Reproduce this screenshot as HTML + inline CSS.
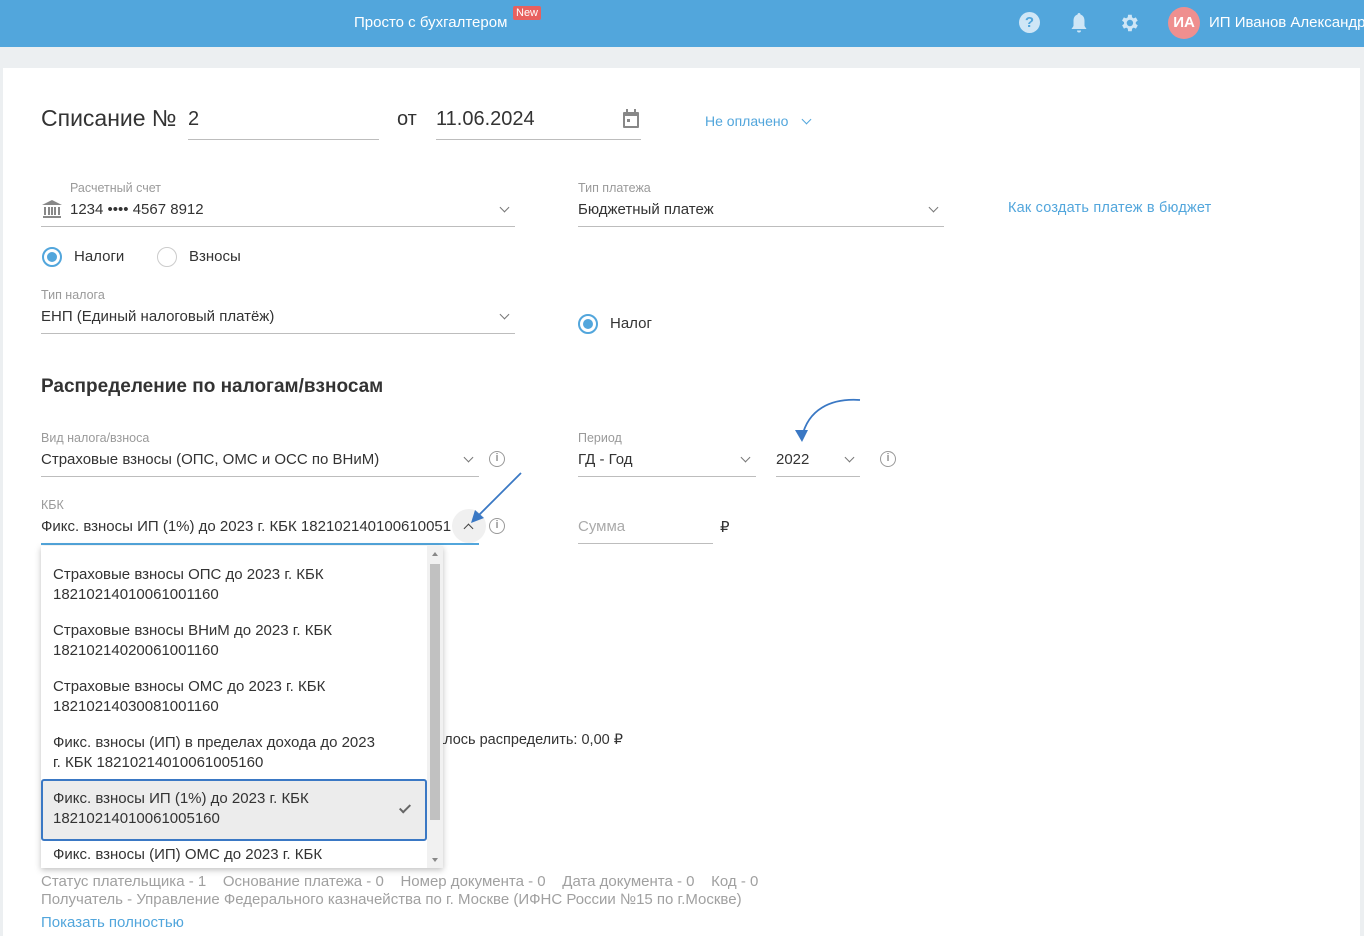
<!DOCTYPE html>
<html><head><meta charset="utf-8"><style>
*{box-sizing:border-box;margin:0;padding:0}
body{width:1364px;height:936px;overflow:hidden;background:#eceff1;font-family:"Liberation Sans","DejaVu Sans",sans-serif;color:#333;position:relative}
.a{position:absolute;white-space:nowrap}
.hdr{position:absolute;left:0;top:0;width:1364px;height:47px;background:#52a6dc}
.panel{position:absolute;left:3px;top:68px;width:1357px;height:868px;background:#fff}
.lbl{font-size:12.5px;color:#9a9a9a}
.val{font-size:15px;color:#333}
.line{position:absolute;height:1px;background:#bdbdbd}
.chev{position:absolute;width:7px;height:7px;border-right:1.5px solid #777;border-bottom:1.5px solid #777;transform:rotate(45deg)}
.info{position:absolute;width:16px;height:16px;border:1.5px solid #999;border-radius:50%;font-size:11px;color:#999;text-align:center;line-height:13px;font-weight:bold}
.radio{position:absolute;width:20px;height:20px;border:1.5px solid #ccc;border-radius:50%}
.radio.on{border:2px solid #52a6dc}
.radio.on:after{content:"";position:absolute;left:3px;top:3px;width:10px;height:10px;border-radius:50%;background:#52a6dc}
.dd{position:absolute;left:41px;top:546px;width:402px;height:322px;background:#fff;box-shadow:0 2px 6px rgba(0,0,0,.25);overflow:hidden}
.it{position:absolute;left:12px;font-size:15px;line-height:20px;color:#333}
</style></head><body>
<div class="hdr"></div>
<div class="a" style="left:354px;top:14px;font-size:15px;color:#fff">Просто с бухгалтером</div>
<div class="a" style="left:513px;top:6px;background:#e8605f;color:#fff;font-size:11px;padding:1px 3px;border-radius:2px">New</div>
<div class="a" style="left:1019px;top:12px;width:21px;height:21px;border-radius:50%;background:#cfe6f6;color:#52a6dc;font-size:15px;font-weight:bold;text-align:center;line-height:21px">?</div>
<svg class="a" style="left:1069px;top:12px" width="20" height="22" viewBox="0 0 20 22"><path d="M10 1c-1 0-1.5.8-1.5 1.5C5.5 3.5 4.5 6 4.5 9v5L2.5 17h15l-2-3V9c0-3-1-5.5-4-6.5C11.5 1.8 11 1 10 1zM8 18.5a2 2 0 0 0 4 0z" fill="#cfe6f6"/></svg>
<svg class="a" style="left:1118px;top:12px" width="22" height="22" viewBox="0 0 24 24"><path fill="#cfe6f6" d="M19.4 13a7.5 7.5 0 0 0 0-2l2.1-1.6-2-3.5-2.5 1a7 7 0 0 0-1.7-1L15 3h-4l-.4 2.9a7 7 0 0 0-1.7 1l-2.5-1-2 3.5L6.6 11a7.5 7.5 0 0 0 0 2l-2.1 1.6 2 3.5 2.5-1a7 7 0 0 0 1.7 1L11 21h4l.4-2.9a7 7 0 0 0 1.7-1l2.5 1 2-3.5zM13 15.5a3.5 3.5 0 1 1 0-7 3.5 3.5 0 0 1 0 7z"/></svg>
<div class="a" style="left:1168px;top:7px;width:32px;height:32px;border-radius:50%;background:#ef8f8f;color:#fff;font-size:15px;font-weight:bold;text-align:center;line-height:32px">ИА</div>
<div class="a" style="left:1209px;top:14px;font-size:15px;color:#fff">ИП Иванов Александр</div>
<div class="panel"></div>

<div class="a" style="left:41px;top:105px;font-size:23px;color:#333">Списание №</div>
<div class="a" style="left:188px;top:108px;font-size:20px">2</div>
<div class="line" style="left:188px;top:139px;width:191px"></div>
<div class="a" style="left:397px;top:108px;font-size:20px">от</div>
<div class="a" style="left:436px;top:108px;font-size:20px">11.06.2024</div>
<div class="line" style="left:436px;top:139px;width:205px"></div>
<svg class="a" style="left:622px;top:109px" width="18" height="20" viewBox="0 0 18 20"><rect x="1" y="3" width="16" height="16" rx="1" fill="#888"/><rect x="3" y="7" width="12" height="10" fill="#fff"/><rect x="4" y="0" width="2" height="5" fill="#888"/><rect x="12" y="0" width="2" height="5" fill="#888"/><rect x="5" y="10" width="3" height="3" fill="#888"/></svg>
<div class="a" style="left:705px;top:113px;font-size:14px;color:#52a6dc">Не оплачено</div>
<div class="chev" style="left:803px;top:116px;border-color:#52a6dc"></div>

<div class="a lbl" style="left:70px;top:181px">Расчетный счет</div>
<svg class="a" style="left:42px;top:200px" width="20" height="18" viewBox="0 0 20 18"><path d="M10 0L0 5h20z M1 16h18v2H1z M2 7h2v8H2zM6 7h2v8H6zM12 7h2v8h-2zM16 7h2v8h-2z M9 7h2v8H9z" fill="#888"/></svg>
<div class="a val" style="left:70px;top:201px">1234 •••• 4567 8912</div>
<div class="chev" style="left:501px;top:204px"></div>
<div class="line" style="left:41px;top:226px;width:474px"></div>
<div class="a lbl" style="left:578px;top:181px">Тип платежа</div>
<div class="a val" style="left:578px;top:201px">Бюджетный платеж</div>
<div class="chev" style="left:930px;top:204px"></div>
<div class="line" style="left:578px;top:226px;width:366px"></div>
<div class="a" style="left:1008px;top:200px;font-size:14.5px;color:#52a6dc;letter-spacing:0.2px">Как создать платеж в бюджет</div>

<div class="radio on" style="left:42px;top:247px"></div>
<div class="a val" style="left:74px;top:248px">Налоги</div>
<div class="radio" style="left:157px;top:247px"></div>
<div class="a val" style="left:189px;top:248px">Взносы</div>

<div class="a lbl" style="left:41px;top:288px">Тип налога</div>
<div class="a val" style="left:41px;top:308px">ЕНП (Единый налоговый платёж)</div>
<div class="chev" style="left:501px;top:311px"></div>
<div class="line" style="left:41px;top:333px;width:474px"></div>
<div class="radio on" style="left:578px;top:314px"></div>
<div class="a val" style="left:610px;top:315px">Налог</div>

<div class="a" style="left:41px;top:376px;font-size:19px;font-weight:bold;color:#333">Распределение по налогам/взносам</div>

<div class="a lbl" style="left:41px;top:431px">Вид налога/взноса</div>
<div class="a val" style="left:41px;top:451px">Страховые взносы (ОПС, ОМС и ОСС по ВНиМ)</div>
<div class="chev" style="left:465px;top:454px"></div>
<div class="line" style="left:41px;top:476px;width:438px"></div>
<div class="info" style="left:489px;top:451px">i</div>
<div class="a lbl" style="left:578px;top:431px">Период</div>
<div class="a val" style="left:578px;top:451px">ГД - Год</div>
<div class="chev" style="left:742px;top:454px"></div>
<div class="line" style="left:578px;top:476px;width:178px"></div>
<div class="a val" style="left:776px;top:451px">2022</div>
<div class="chev" style="left:846px;top:454px"></div>
<div class="line" style="left:776px;top:476px;width:84px"></div>
<div class="info" style="left:880px;top:451px">i</div>
<svg class="a" style="left:790px;top:395px" width="75" height="50" viewBox="0 0 75 50"><path d="M70 5C40 3 18 15 12 42" stroke="#3a78c4" stroke-width="1.8" fill="none"/><path d="M5 35L12 47 18 35z" fill="#3a78c4"/></svg>

<div class="a lbl" style="left:41px;top:498px">КБК</div>
<div class="a val" style="left:41px;top:518px;width:410px;overflow:hidden">Фикс. взносы ИП (1%) до 2023 г. КБК 18210214010061005160</div>
<div class="a" style="left:452px;top:509px;width:34px;height:34px;border-radius:50%;background:#f0f0f0"></div>
<div class="chev" style="left:465px;top:525px;transform:rotate(-135deg);border-color:#444"></div>
<div class="a" style="left:41px;top:543px;width:438px;height:2px;background:#52a6dc"></div>
<div class="info" style="left:489px;top:518px">i</div>
<svg class="a" style="left:468px;top:470px" width="58" height="58" viewBox="0 0 58 58"><path d="M53 3L10 46" stroke="#3a78c4" stroke-width="1.8"/><path d="M3 53l4-13 9 8z" fill="#3a78c4"/></svg>
<div class="a" style="left:578px;top:518px;font-size:15px;color:#aaa">Сумма</div>
<div class="line" style="left:578px;top:543px;width:135px"></div>
<div class="a val" style="left:720px;top:518px">₽</div>

<div class="a val" style="left:411px;top:732px;font-size:14.5px">Осталось распределить: 0,00 ₽</div>

<div class="dd">
<div style="position:absolute;right:0;top:0;width:16px;height:322px;background:#f1f1f1"></div>
<div style="position:absolute;right:3px;top:18px;width:10px;height:256px;background:#c1c1c1"></div>
<div style="position:absolute;right:5px;top:6px;border:3px solid transparent;border-bottom:4px solid #888;border-top:0"></div>
<div style="position:absolute;right:5px;bottom:6px;border:3px solid transparent;border-top:4px solid #888;border-bottom:0"></div>
<div class="it" style="top:19px">Страховые взносы ОПС до 2023 г. КБК<br>18210214010061001160</div>
<div class="it" style="top:75px">Страховые взносы ВНиМ до 2023 г. КБК<br>18210214020061001160</div>
<div class="it" style="top:131px">Страховые взносы ОМС до 2023 г. КБК<br>18210214030081001160</div>
<div class="it" style="top:187px">Фикс. взносы (ИП) в пределах дохода до 2023<br>г. КБК 18210214010061005160</div>
<div style="position:absolute;left:0;top:233px;width:386px;height:62px;background:#ececec;border:2px solid #3a78c4;border-radius:3px"></div>
<div class="it" style="top:243px">Фикс. взносы ИП (1%) до 2023 г. КБК<br>18210214010061005160</div>
<div class="a" style="left:361px;top:256px;width:6px;height:11px;border-right:2px solid #666;border-bottom:2px solid #666;transform:rotate(45deg)"></div>
<div class="it" style="top:299px">Фикс. взносы (ИП) ОМС до 2023 г. КБК</div>
</div>

<div class="a" style="left:41px;top:873px;font-size:15px;color:#a0a0a0">Статус плательщика - 1&nbsp;&nbsp;&nbsp; Основание платежа - 0&nbsp;&nbsp;&nbsp; Номер документа - 0&nbsp;&nbsp;&nbsp; Дата документа - 0&nbsp;&nbsp;&nbsp; Код - 0</div>
<div class="a" style="left:41px;top:891px;font-size:15px;color:#a0a0a0">Получатель - Управление Федерального казначейства по г. Москве (ИФНС России №15 по г.Москве)</div>
<div class="a" style="left:41px;top:914px;font-size:15px;color:#52a6dc">Показать полностью</div>
</body></html>
